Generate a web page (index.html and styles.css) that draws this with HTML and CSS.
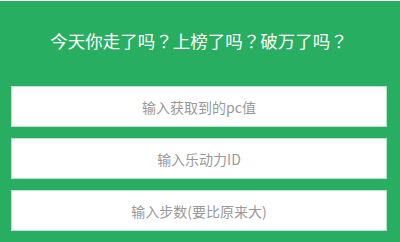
FILE: index.html
```html
<!DOCTYPE html>
<html lang="zh-CN">
<head>
  <meta charset="UTF-8">
  <meta name="viewport" content="width=device-width, initial-scale=1.0">
  <title>刷步数</title>
  <link rel="stylesheet" href="styles.css">
</head>
<body>
  <div class="app">
    <h1 class="title">今天你走了吗<span class="qm" lang="zh-TW">？</span>上榜了吗<span class="qm" lang="zh-TW">？</span>破万了吗<span class="qm" lang="zh-TW">？</span></h1>
    <form class="step-form">
      <input type="text" class="field" placeholder="输入获取到的pc值">
      <input type="text" class="field" placeholder="输入乐动力ID">
      <input type="text" class="field" placeholder="输入步数(要比原来大)">
    </form>
  </div>
</body>
</html>
```

FILE: styles.css
```css
body {
  margin: 0;
  padding-top: 1px;
  background-color: #fff;
  font-family: "Noto Sans CJK SC", "Liberation Sans", sans-serif;
}

.app {
  background-color: #27ae60;
  padding: 0 13px 0 11px;
  height: 241px;
  box-sizing: border-box;
}

.title {
  margin: 0;
  padding: 28px 0 33px;
  line-height: 24px;
  font-size: 17.5px;
  font-weight: normal;
  color: #fff;
  text-align: center;
}

/* centred full-width question mark */
.qm {
  font-family: "Noto Sans CJK TC", sans-serif;
}

.step-form {
  display: flex;
  flex-direction: column;
  gap: 11px;
}

.field {
  display: block;
  width: 100%;
  height: 41px;
  box-sizing: border-box;
  margin: 0;
  border: 1px solid #b9e4cb;
  background-color: #fff;
  font-family: inherit;
  font-size: 14px;
  text-align: center;
  color: #333;
  outline: none;
}

.field::placeholder {
  color: #999;
}
```
